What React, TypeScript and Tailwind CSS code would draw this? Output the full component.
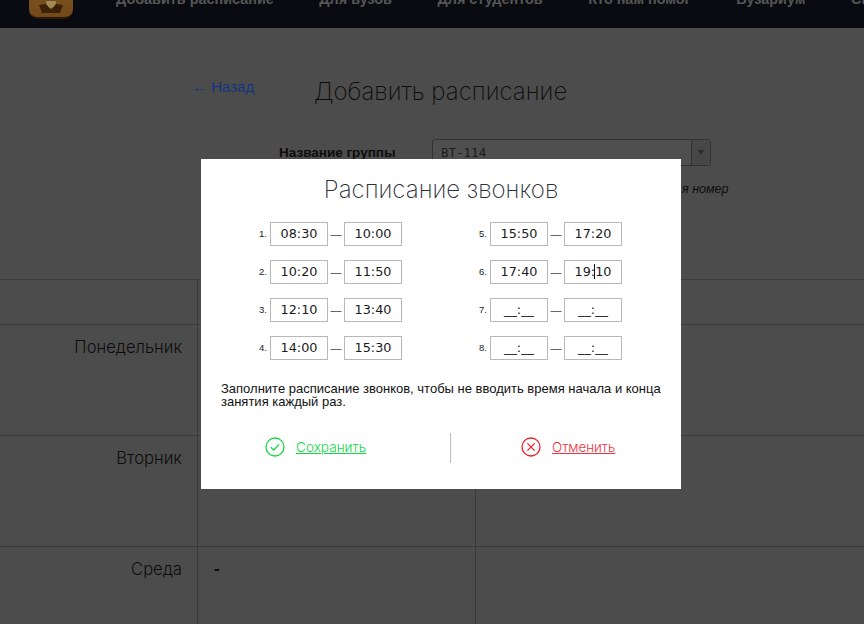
const FONT = "font-['Liberation_Sans',Arial,sans-serif]";

const left = [
  ["1.", "08:30", "10:00"],
  ["2.", "10:20", "11:50"],
  ["3.", "12:10", "13:40"],
  ["4.", "14:00", "15:30"],
];
const right = [
  ["5.", "15:50", "17:20"],
  ["6.", "17:40", "19:10"],
  ["7.", "__:__", "__:__"],
  ["8.", "__:__", "__:__"],
];

function Box({ value, caret }: { value: string; caret?: boolean }) {
  return (
    <div className="w-[58px] h-[24px] border border-[#b8b8b8] bg-white flex items-center justify-center font-['DejaVu_Sans',sans-serif] text-[12.8px] leading-none text-[#1a1a1a]">
      {caret ? (
        <span>
          19:<span className="border-l border-[#111] -ml-px">10</span>
        </span>
      ) : (
        value
      )}
    </div>
  );
}

function Row({ row }: { row: string[] }) {
  return (
    <div className="flex items-center h-[24px]">
      <span className="w-[29px] pr-[3px] text-right text-[9.5px] text-[#222] pt-[1px]">{row[0]}</span>
      <Box value={row[1]} />
      <span className="w-[16px] text-center text-[11px] text-[#444] pt-[1px]">—</span>
      <Box value={row[2]} caret={row[2] === "19:10"} />
    </div>
  );
}

function Modal() {
  return (
    <div className={`absolute left-[201px] top-[159px] w-[480px] h-[330px] bg-white ${FONT}`}>
      <h2 className="pt-[16px] text-center font-['Inter',sans-serif] font-extralight text-[24px] leading-[30px] text-[#2c2f38]">
        Расписание звонков
      </h2>
      <div className="flex mt-[17px] pl-[40px] gap-[29px]">
        <div className="flex flex-col gap-[14px] w-[191px]">
          {left.map((r) => (
            <Row key={r[0]} row={r} />
          ))}
        </div>
        <div className="flex flex-col gap-[14px] w-[191px]">
          {right.map((r) => (
            <Row key={r[0]} row={r} />
          ))}
        </div>
      </div>
      <p className="mt-[22px] px-[20px] text-[13px] leading-[13px] text-[#111]">
        Заполните расписание звонков, чтобы не вводить время начала и конца занятия каждый раз.
      </p>
      <div className="flex items-center mt-[25px] h-[30px]">
        <div className="flex items-center w-[249px] pl-[64px] gap-[11px] mb-[2px]">
          <svg width="20" height="20" viewBox="0 0 20 20" fill="none" stroke="#14d844" strokeWidth="1.3">
            <circle cx="10" cy="10" r="9" />
            <path d="M5.8 10.2 L8.8 13 L14.2 7.4" />
          </svg>
          <span className="text-[13.6px] font-['Inter',sans-serif] font-light underline text-[#10d848]">Сохранить</span>
        </div>
        <div className="w-px h-[30px] bg-[#bdbdbd]" />
        <div className="flex items-center pl-[70px] gap-[11px] mb-[2px]">
          <svg width="20" height="20" viewBox="0 0 20 20" fill="none" stroke="#e9202c" strokeWidth="1.3">
            <circle cx="10" cy="10" r="9" />
            <path d="M6.4 6.4 L13.6 13.6 M13.6 6.4 L6.4 13.6" />
          </svg>
          <span className="text-[13.4px] font-['Inter',sans-serif] font-light underline text-[#f0303f]">Отменить</span>
        </div>
      </div>
    </div>
  );
}

function Header() {
  const items = ["Добавить расписание", "Для вузов", "Для студентов", "Кто нам помог", "Вузариум", "Связь"];
  return (
    <div className="h-[28px] bg-[#0a0b10] flex overflow-hidden shrink-0">
      <div className="w-[44px] h-[48px] ml-[29px] -mt-[29px] rounded-[9px] bg-gradient-to-b from-[#7d5a22] to-[#74491a] border-b-2 border-[#2a1a08] shrink-0 flex items-end justify-center">
        <svg width="28" height="14" viewBox="0 0 28 14" className="mb-[2px]">
          <circle cx="14" cy="2" r="5" fill="#a08a58" />
          <path d="M2 4 L9 3 L14 9 L19 3 L26 4 L23 12 L5 12 Z" fill="#3a2108" />
        </svg>
      </div>
      <nav className="flex gap-[45.6px] ml-[43px] -mt-[11px] text-[14.4px] leading-[20px] font-bold text-[#565656] whitespace-nowrap">
        {items.map((t) => (
          <span key={t}>{t}</span>
        ))}
      </nav>
    </div>
  );
}

function Table() {
  const cell = "border-l border-[#3a3a3a]";
  const rows: [string, number, string][] = [
    ["", 45, ""],
    ["Понедельник", 111, ""],
    ["Вторник", 111, ""],
    ["Среда", 111, "-"],
  ];
  return (
    <div className="mt-[79px] border-t border-[#3a3a3a]">
      {rows.map(([day, h, v], i) => (
        <div
          key={i}
          style={{ height: h }}
          className={`grid grid-cols-[197px_278px_389px] ${i < 3 ? "border-b border-[#3a3a3a]" : ""}`}
        >
          <div className="pt-[11px] pr-[15px] text-right font-['Inter',sans-serif] font-light text-[16.6px] leading-[22px] text-[#0c0c0c]">
            {day}
          </div>
          <div className={`${cell} pl-[16px] pt-[11px] text-[17px] font-bold leading-[22px] text-[#0c0c0c]`}>{v}</div>
          <div className={cell} />
        </div>
      ))}
    </div>
  );
}

export default function App() {
  return (
    <div className={`relative w-[864px] h-[624px] overflow-hidden bg-[#4c4c4c] flex flex-col ${FONT}`}>
      <Header />
      <div className="flex items-center pt-[51px] h-[77px] pl-[192px]">
        <span className="w-[122px] -mt-[10px] text-[15px] text-[#12357f]">← Назад</span>
        <h1 className="font-['Inter',sans-serif] font-extralight text-[24px] leading-[30px] text-[#0d0d0d]">
          Добавить расписание
        </h1>
      </div>
      <div className="flex items-center mt-[34px] h-[27px] pl-[279px]">
        <span className="w-[153px] pt-[2px] text-[13.5px] font-bold text-[#0d0d0d]">Название группы</span>
        <div className="w-[279px] h-[27px] border border-[#333] rounded-[3px] bg-[#4f4f4f] flex">
          <span className="flex-1 pl-[8px] font-['DejaVu_Sans_Mono',monospace] text-[12.5px] leading-[25px] text-[#1c1c1c]">
            BT-114
          </span>
          <span className="w-[19px] border-l border-[#333] bg-[#474747] flex items-center justify-center">
            <span className="w-0 h-0 border-x-[3px] border-x-transparent border-t-[5px] border-t-[#2a2a2a]" />
          </span>
        </div>
      </div>
      <div className="h-[21px] mt-[13px] pl-[682px] text-[12.5px] italic leading-[21px] text-[#0d0d0d]">я номер</div>
      <Table />
      <Modal />
    </div>
  );
}
